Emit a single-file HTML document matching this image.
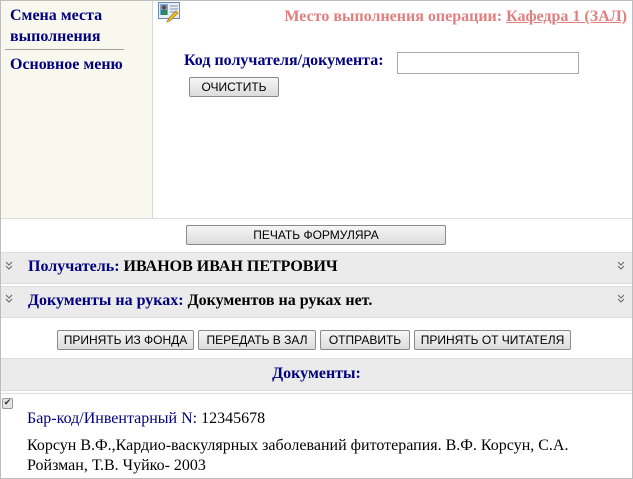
<!DOCTYPE html>
<html><head><meta charset="utf-8"><style>
*{margin:0;padding:0;box-sizing:border-box}
body{width:633px;height:479px;background:#fff;position:relative;overflow:hidden;font-family:"Liberation Serif","DejaVu Serif",serif}
.a{position:absolute;white-space:nowrap}
.b{font-weight:bold}
.nav{color:#000080;font-size:16px;font-weight:bold}
.btn{position:absolute;height:20px;border:1px solid #8a8a8a;border-radius:2px;background:linear-gradient(#f6f6f6,#dcdcdc);font-family:"Liberation Sans",sans-serif;font-size:12px;text-align:center;line-height:18px;color:#000}
.band{position:absolute;left:1px;width:631px;background:#ebebeb;border-top:1px solid #ddd;border-bottom:1px solid #ddd}
.chev{position:absolute}
</style></head><body>
<div class="a" style="left:0;top:0;width:633px;height:479px;border:1px solid #bdbdbd"></div>
<div class="a" style="left:1px;top:1px;width:152px;height:217px;background:#f9f8ef;border-right:1px solid #d8d8d8"></div>
<div class="a nav" style="left:10px;top:5px;line-height:21px">Смена места<br>выполнения</div>
<div class="a" style="left:5px;top:49px;width:119px;height:1px;background:#a0a0a0"></div>
<div class="a nav" style="left:10px;top:56px">Основное меню</div>
<svg class="a" style="left:158px;top:2px" width="24" height="22" viewBox="0 0 24 22">
<rect x="0.5" y="0.5" width="21" height="16" fill="#e8eef8" stroke="#6b86b8"/>
<rect x="2" y="2" width="8" height="11" fill="#7aa0d8"/>
<circle cx="6" cy="5.5" r="2.2" fill="#6b4a2a"/><rect x="3" y="8" width="6" height="5" fill="#2a8a5a"/>
<path d="M12 4h8M12 7h8M12 10h6" stroke="#8090b0"/>
<path d="M9 20l2-4 7-7 2 2-7 7z" fill="#f0c020" stroke="#a07010" stroke-width=".7"/>
</svg>
<div class="a b" style="right:6px;top:8px;font-size:16px;color:#e07f7f">Место выполнения операции: <span style="text-decoration:underline">Кафедра 1 (ЗАЛ)</span></div>
<div class="a nav" style="left:184px;top:52px">Код получателя/документа:</div>
<div class="a" style="left:397px;top:52px;width:182px;height:22px;border:1px solid #a9a9a9;background:#fff"></div>
<div class="btn" style="left:189px;top:77px;width:90px">ОЧИСТИТЬ</div>
<div class="a" style="left:1px;top:218px;width:631px;height:1px;background:#ddd"></div>
<div class="btn" style="left:186px;top:225px;width:260px">ПЕЧАТЬ ФОРМУЛЯРА</div>
<div class="band" style="top:252px;height:32px"></div>
<svg class="chev" style="left:5px;top:261px" width="8" height="9"><path d="M1 1l3 3 3-3M1 5l3 3 3-3" fill="none" stroke="#666"/></svg>
<svg class="chev" style="left:617px;top:261px" width="8" height="9"><path d="M1 1l3 3 3-3M1 5l3 3 3-3" fill="none" stroke="#666"/></svg>
<div class="a b" style="left:28px;top:258px;font-size:16px"><span style="color:#000080">Получатель:</span> ИВАНОВ ИВАН ПЕТРОВИЧ</div>
<div class="band" style="top:286px;height:32px"></div>
<svg class="chev" style="left:5px;top:294px" width="8" height="9"><path d="M1 1l3 3 3-3M1 5l3 3 3-3" fill="none" stroke="#666"/></svg>
<svg class="chev" style="left:617px;top:294px" width="8" height="9"><path d="M1 1l3 3 3-3M1 5l3 3 3-3" fill="none" stroke="#666"/></svg>
<div class="a b" style="left:28px;top:292px;font-size:16px"><span style="color:#000080">Документы на руках:</span> Документов на руках нет.</div>
<div class="btn" style="left:57px;top:330px;width:137px">ПРИНЯТЬ ИЗ ФОНДА</div>
<div class="btn" style="left:198px;top:330px;width:118px">ПЕРЕДАТЬ В ЗАЛ</div>
<div class="btn" style="left:320px;top:330px;width:90px">ОТПРАВИТЬ</div>
<div class="btn" style="left:414px;top:330px;width:157px">ПРИНЯТЬ ОТ ЧИТАТЕЛЯ</div>
<div class="band" style="top:358px;height:33px"></div>
<div class="a b" style="left:0;width:633px;text-align:center;top:365px;font-size:16px;color:#000080">Документы:</div>
<div class="a" style="left:1px;top:393px;width:631px;height:1px;background:#ddd"></div>
<div class="a" style="left:2px;top:398px;width:11px;height:11px;border:1px solid #999;border-radius:2px;background:#e4e4e4;font-size:9px;line-height:9px;text-align:center;font-family:'DejaVu Sans',sans-serif;color:#333">✔</div>
<div class="a" style="left:27px;top:410px;font-size:16px"><span style="color:#000080">Бар-код/Инвентарный N:</span> 12345678</div>
<div class="a" style="left:27px;top:436px;font-size:16px;line-height:20px">Корсун В.Ф.,Кардио-васкулярных заболеваний фитотерапия. В.Ф. Корсун, С.А.<br>Ройзман, Т.В. Чуйко- 2003</div>
</body></html>
